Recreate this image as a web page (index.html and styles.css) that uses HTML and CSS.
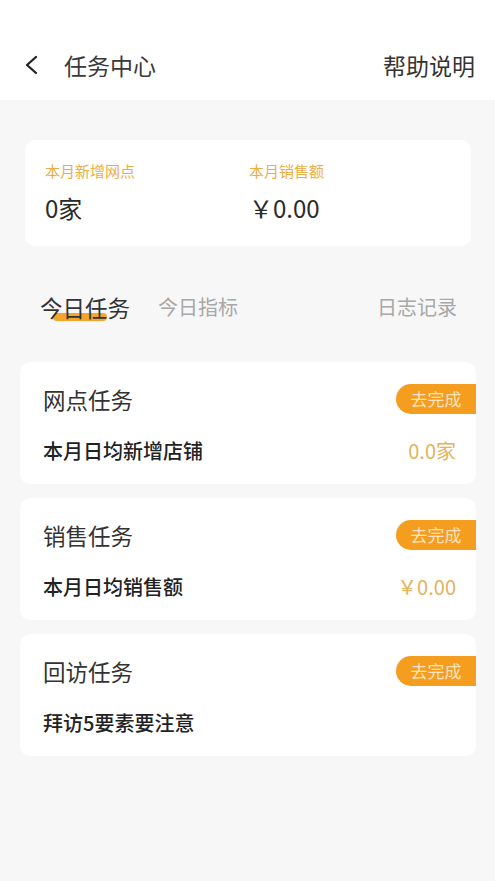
FILE: index.html
```html
<!DOCTYPE html>
<html lang="zh">
<head>
<meta charset="utf-8">
<title>任务中心</title>
<link rel="stylesheet" href="styles.css">
</head>
<body>
<header class="topbar">
  <div class="nav-left">
    <svg class="back" width="16" height="20" viewBox="0 0 16 20"><path d="M12 2 L3 10 L12 18" fill="none" stroke="#222" stroke-width="2.3" stroke-linecap="round" stroke-linejoin="round"/></svg>
    <span class="title">任务中心</span>
  </div>
  <span class="help">帮助说明</span>
</header>
<main class="content">
  <section class="summary">
    <div class="stat">
      <div class="stat-label">本月新增网点</div>
      <div class="stat-value">0家</div>
    </div>
    <div class="stat">
      <div class="stat-label">本月销售额</div>
      <div class="stat-value">￥0.00</div>
    </div>
  </section>
  <nav class="tabs">
    <div class="tab-group">
      <span class="tab active">今日任务</span>
      <span class="tab">今日指标</span>
    </div>
    <span class="tab">日志记录</span>
  </nav>
  <section class="tasks">
    <div class="task">
      <div class="task-head">
        <span class="task-title">网点任务</span>
        <span class="btn">去完成</span>
      </div>
      <div class="task-row">
        <span class="row-label">本月日均新增店铺</span>
        <span class="row-value">0.0家</span>
      </div>
    </div>
    <div class="task">
      <div class="task-head">
        <span class="task-title">销售任务</span>
        <span class="btn">去完成</span>
      </div>
      <div class="task-row">
        <span class="row-label">本月日均销售额</span>
        <span class="row-value">￥0.00</span>
      </div>
    </div>
    <div class="task">
      <div class="task-head">
        <span class="task-title">回访任务</span>
        <span class="btn">去完成</span>
      </div>
      <div class="task-row">
        <span class="row-label">拜访5要素要注意</span>
      </div>
    </div>
  </section>
</main>
</body>
</html>
```
FILE: styles.css
```css
* { box-sizing: border-box; }
html, body { margin: 0; padding: 0; }
body {
  background: #f7f7f7;
  font-family: "Noto Sans CJK SC", "Noto Sans", sans-serif;
  color: #333;
  width: 495px;
  min-height: 881px;
}
.topbar {
  height: 100px;
  background: #fff;
  display: flex;
  align-items: center;
  justify-content: space-between;
  padding: 30px 20px 0 24px;
}
.nav-left { display: flex; align-items: center; gap: 24px; }
.back { display: block; }
.title { font-size: 23px; color: #3a3a3a; line-height: 30px; }
.help { font-size: 23px; color: #333; line-height: 30px; }

.content { padding-top: 40px; }
.summary {
  margin: 0 24px 0 25px;
  background: #fff;
  border-radius: 10px;
  height: 106px;
  padding: 21px 20px 0 20px;
  display: grid;
  grid-template-columns: 204px 1fr;
}
.stat-label { font-size: 15px; line-height: 20px; color: #eaae45; }
.stat-value { font-size: 24px; line-height: 30px; color: #2a2a2a; margin-top: 12px; }

.tabs {
  margin-top: 41px;
  height: 40px;
  padding: 0 38px 0 40px;
  display: flex;
  align-items: center;
  justify-content: space-between;
}
.tab-group { display: flex; align-items: center; gap: 28px; }
.tab { font-size: 20px; line-height: 30px; color: #a8a8a8; position: relative; z-index: 0; }
.tab.active { font-size: 22.5px; color: #333; }
.tab.active::after {
  content: "";
  position: absolute;
  left: 13px;
  top: 21px;
  width: 54px;
  height: 8px;
  border-radius: 4px;
  background: #f4a52c;
  z-index: -1;
}

.tasks {
  margin: 35px 19px 0 20px;
  display: flex;
  flex-direction: column;
  gap: 14px;
}
.task {
  background: #fff;
  border-radius: 10px;
  height: 122px;
  padding: 22px 0 0 23px;
}
.task-head {
  height: 30px;
  display: flex;
  align-items: center;
  justify-content: space-between;
}
.task-title { font-size: 22.5px; color: #333; line-height: 30px; }
.btn {
  width: 80px;
  height: 30px;
  background: #f59d1e;
  color: #fde3bd;
  font-size: 17px;
  line-height: 30px;
  text-align: center;
  border-radius: 15px 0 0 15px;
}
.task-row {
  margin-top: 24px;
  display: flex;
  align-items: center;
  justify-content: space-between;
  padding-right: 20px;
  height: 24px;
}
.row-label { font-size: 20px; font-weight: 500; color: #222; }
.row-value { font-size: 20px; color: #e3b25c; }
```
